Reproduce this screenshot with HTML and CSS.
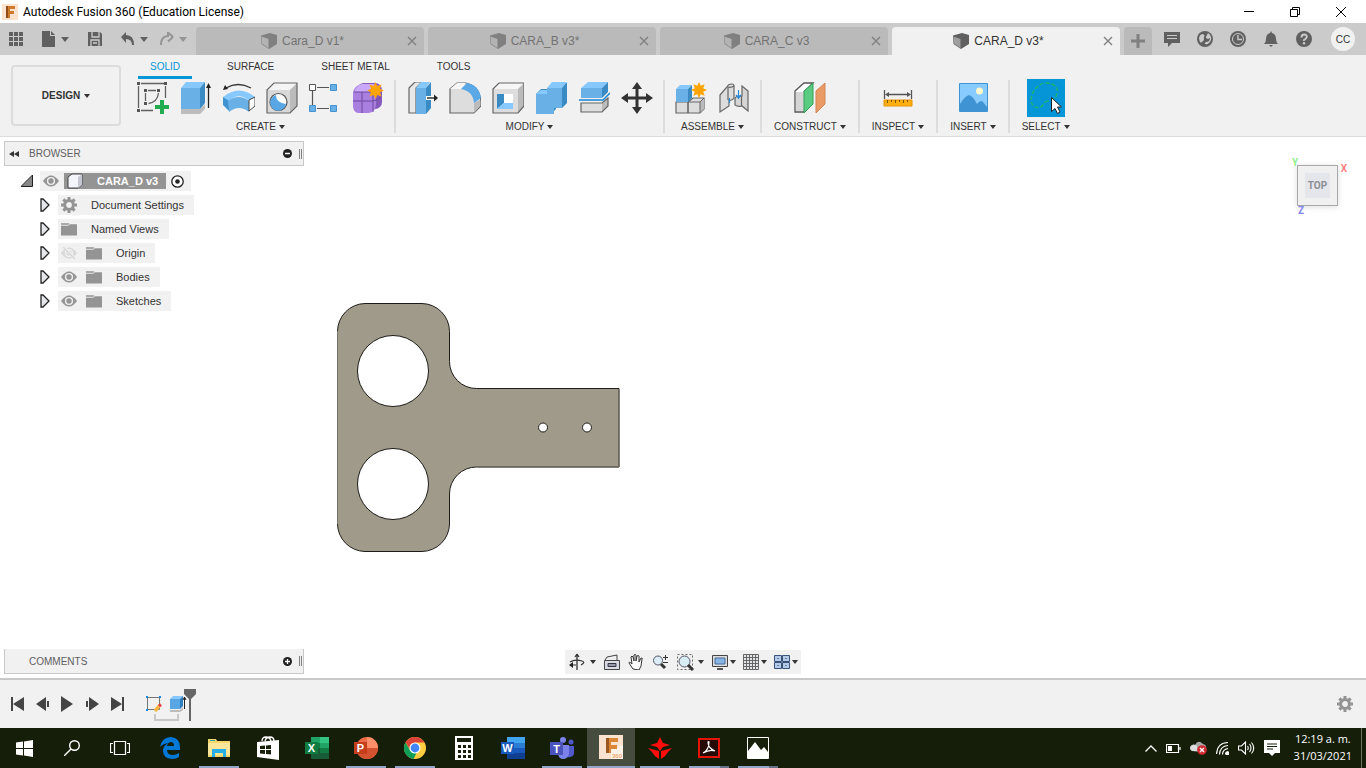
FILE: index.html
```html
<!DOCTYPE html>
<html lang="en">
<head>
<meta charset="utf-8">
<title>Autodesk Fusion 360 (Education License)</title>
<link rel="stylesheet" href="styles.css">
</head>
<body>
<svg class="defs" aria-hidden="true">
  <defs>
    <symbol id="cube" viewBox="0 0 16 16"><path d="M0 2.500L9 0l7 2v9l-8 5-7.500-5z" fill="currentColor"/><path d="M.5 3.500L7.500 6v9l-6.500-4.500z" fill="#fff" opacity=".4"/></symbol>
    <symbol id="close" viewBox="0 0 10 10"><path d="M1 1l8 8M9 1L1 9" stroke="currentColor" stroke-width="1.4"/></symbol>
    <symbol id="eye" viewBox="0 0 16 16"><path d="M0 8q8-11 16 0-8 11-16 0z" fill="currentColor"/><circle cx="8" cy="8" r="3.4" fill="none" stroke="#f1f1f1" stroke-width="1.4"/></symbol>
    <symbol id="folder" viewBox="0 0 17 14"><path d="M0 1h8l2 1h7v12H0z" fill="currentColor"/><path d="M0 3h8l2-2" fill="none" stroke="#f1f1f1"/></symbol>
    <symbol id="expand" viewBox="0 0 10 14"><path d="M1 1h2l6 6-6 6H1z" fill="#e4e6ea" stroke="#222" stroke-width="1.3"/></symbol>
    <symbol id="gear" viewBox="0 0 16 16"><g fill="currentColor"><path d="M6.5 0h3v16h-3zM0 6.5h16v3H0z"/><path d="M6.5 0h3v16h-3zM0 6.5h16v3H0z" transform="rotate(45 8 8)"/></g><circle cx="8" cy="8" r="4.4" fill="#f1f1f1" stroke="currentColor" stroke-width="3"/></symbol>
    <symbol id="star" viewBox="-8 -8 16 16"><path d="M8 0 4.2 1.7 5.7 5.7 1.7 4.2 0 8-1.7 4.2-5.7 5.7-4.2 1.7-8 0-4.2-1.7-5.7-5.7-1.7-4.2 0-8 1.7-4.2 5.7-5.7 4.2-1.7z" fill="#ffa400"/></symbol>
  </defs>
</svg>

<header class="titlebar">
  <svg class="app-logo" width="16" height="16" viewBox="0 0 16 16"><rect width="16" height="16" fill="#fbe3cf"/><path d="M4 2h9v3H8v2h4v3H8v4H4z" fill="#cf7a2c"/><path d="M4 2h2v12H4z" fill="#8e4c18"/></svg>
  <h1 class="app-title">Autodesk Fusion 360 (Education License)</h1>
  <div class="window-buttons">
    <button aria-label="Minimize"><svg width="10" height="10"><path d="M0 4.5h10" stroke="#000"/></svg></button>
    <button aria-label="Restore"><svg width="10" height="10" fill="none" stroke="#000"><path d="M.5 2.500h7v7h-7zM2.500 2.500v-2h7v7h-2"/></svg></button>
    <button aria-label="Close"><svg width="10" height="10"><path d="M0 0l10 10M10 0L0 10" stroke="#000"/></svg></button>
  </div>
</header>

<nav class="tabbar">
  <div class="quick-tools">
    <button aria-label="Data panel"><svg width="14" height="14" fill="#606060"><path d="M0 0h4v4H0zM5 0h4v4H5zM10 0h4v4h-4zM0 5h4v4H0zM5 5h4v4H5zM10 5h4v4h-4zM0 10h4v4H0zM5 10h4v4H5zM10 10h4v4h-4z"/></svg></button>
    <button class="with-caret" aria-label="File"><svg width="14" height="16"><path d="M0 0h8v5h5v11H0z" fill="#606060"/><path d="M9 0l4 4H9z" fill="#606060"/></svg><i class="caret wide"></i></button>
    <button aria-label="Save"><svg width="14" height="14"><path d="M0 0h12l2 2v12H0z" fill="#606060"/><path d="M4 0v5h7V0M3 14V8h8v6M5 11h4" fill="none" stroke="#cbcbcb" stroke-width="1.3"/></svg></button>
    <div class="history">
      <button class="with-caret" aria-label="Undo"><svg width="14" height="14"><path d="M0 5l5-5v3q8 0 8 10h-2q0-6-6-6v4z" fill="#606060"/></svg><i class="caret wide"></i></button>
      <button class="with-caret faded" aria-label="Redo"><svg width="14" height="14"><path d="M13 5L8 .5V4Q1 4 1 13M13 5L8 9.500" fill="none" stroke="#606060" stroke-width="2"/></svg><i class="caret wide"></i></button>
    </div>
  </div>
  <div class="doc-tabs">
    <div class="doc-tab"><button class="doc-name"><svg width="16" height="16"><use href="#cube"/></svg>Cara_D v1*</button><button class="doc-close" aria-label="Close Cara_D v1"><svg width="10" height="10"><use href="#close"/></svg></button></div>
    <div class="doc-tab"><button class="doc-name"><svg width="16" height="16"><use href="#cube"/></svg>CARA_B v3*</button><button class="doc-close" aria-label="Close CARA_B v3"><svg width="10" height="10"><use href="#close"/></svg></button></div>
    <div class="doc-tab"><button class="doc-name"><svg width="16" height="16"><use href="#cube"/></svg>CARA_C v3</button><button class="doc-close" aria-label="Close CARA_C v3"><svg width="10" height="10"><use href="#close"/></svg></button></div>
    <div class="doc-tab active"><button class="doc-name"><svg width="16" height="16"><use href="#cube"/></svg>CARA_D v3*</button><button class="doc-close" aria-label="Close CARA_D v3"><svg width="10" height="10"><use href="#close"/></svg></button></div>
    <button class="new-tab" aria-label="New design"><svg width="14" height="14"><path d="M7 0v14M0 7h14" stroke="#808080" stroke-width="3"/></svg></button>
  </div>
  <div class="account-tools">
    <button aria-label="Feedback"><svg width="16" height="16"><path d="M0 1h16v11H8l-4 4v-4H0z" fill="#606060"/><path d="M3 4.500h10M3 7.500h10" stroke="#cbcbcb"/></svg></button>
    <button aria-label="Extensions"><svg width="16" height="16"><circle cx="8" cy="8" r="8" fill="#606060"/><path d="M2 7q1-4 4-4l3 3 2-4q4 3 3 7-2 5-6 4l-1-3-3 2q-2-2-2-5z" fill="#cbcbcb"/><path d="M3 13l4-4q-1-4 2-5v3l2 1 2-1q0 4-4 4l-4 4z" fill="#606060"/></svg></button>
    <button aria-label="Job status"><svg width="16" height="16"><circle cx="8" cy="8" r="8" fill="#606060"/><circle cx="8" cy="8" r="5.500" fill="none" stroke="#cbcbcb"/><path d="M8 4v4.500h4" fill="none" stroke="#cbcbcb" stroke-width="1.400"/></svg></button>
    <button aria-label="Notifications"><svg width="16" height="16" fill="#606060"><path d="M8 0l1 2q4 1 4 6 0 3 2 5H1q2-2 2-5 0-5 4-6z"/><path d="M6 14h4l-2 2z"/></svg></button>
    <button aria-label="Help"><svg width="16" height="16"><circle cx="8" cy="8" r="8" fill="#606060"/><path d="M5.500 6.500q0-3 2.700-3t2.600 2.500Q10.500 7.500 8 9v1" fill="none" stroke="#cbcbcb" stroke-width="1.900"/><circle cx="8" cy="12.300" r="1.200" fill="#cbcbcb"/></svg></button>
    <button class="avatar" aria-label="Account">CC</button>
  </div>
</nav>

<section class="ribbon">
  <button class="workspace-switch">DESIGN<i class="caret"></i></button>
  <div class="ribbon-main">
    <div class="ribbon-tabs">
      <button class="ribbon-tab active">SOLID</button>
      <button class="ribbon-tab">SURFACE</button>
      <button class="ribbon-tab">SHEET METAL</button>
      <button class="ribbon-tab">TOOLS</button>
    </div>
    <div class="groups">
      <div class="group">
        <div class="group-icons">
          <button aria-label="Create sketch"><svg width="32" height="32" fill="none" stroke="#606060"><path d="M4 1.500h23M1.500 4v22M28.500 4v12M4 28.500h12M11 8.500h8M8.500 11v8M21.500 11q-1 9-10 10.500" stroke-width="1.300"/><path d="M0 0h3v3H0zM27 0h3v3h-3zM0 27h3v3H0zM7 7h3v3H7zM20 7h3v3h-3zM7 20h3v3H7z" fill="#555" stroke="none"/><path d="M25 18v14M18 25h14" stroke="#21ac50" stroke-width="4"/></svg></button>
          <button aria-label="Extrude"><svg width="32" height="32"><path d="M1 27h19l5-5v5l-5 5H1z" fill="#bdbdbd"/><path d="M1 6v21h19V6z" fill="#69b0e6"/><path d="M1 6l5-6h19l-5 6z" fill="#87c9ff"/><path d="M20 6l5-6v21l-5 6z" fill="#3a8ac4"/><path d="M28.500 5v21" stroke="#222" stroke-width="1.300"/><path d="M28.500 1l2.500 5h-5z" fill="#222"/></svg></button>
          <button aria-label="Revolve"><svg width="32" height="32"><path d="M3 6q12-7 25 0" fill="none" stroke="#333" stroke-width="1.300"/><path d="M0 8l2-5 3 4z" fill="#222"/><path d="M0 15Q16 2 32 15l-6 4Q16 9 5 20z" fill="#87c9ff"/><path d="M0 15l6 4v10l-6-6z" fill="#3f93d2"/><path d="M5 19q11-8 21 0v11q-10-8-20 0z" fill="#69b0e6"/><path d="M26 18l6-3v9l-6 5z" fill="#fff" stroke="#444"/></svg></button>
          <button aria-label="Hole"><svg width="32" height="32"><path d="M1 8h23v23H1z" fill="#d8d8d8"/><path d="M1 8l7-7h23l-7 7z" fill="#f4f4f4"/><path d="M24 8l7-7v23l-7 7z" fill="#bbb"/><path d="M1 8l7-7h23v23l-7 7H1z" fill="none" stroke="#666" stroke-width="1.200"/><circle cx="12.500" cy="20" r="8.500" fill="#fff" stroke="#555" stroke-width="1.200"/><path d="M10 13q0 8 10 9a8 8 0 1 1-10-9z" fill="#58a7e4"/></svg></button>
          <button aria-label="Rectangular pattern"><svg width="32" height="32"><path d="M8 5.500h12M3.500 9v14M8 26.500h12" stroke="#555" stroke-width="1.200"/><path d="M.5 2.500h6v6h-6z" fill="#fff" stroke="#555"/><path d="M21.500 2.500h6v6h-6zM.5 23.500h6v6h-6zM21.500 23.500h6v6h-6z" fill="#69b0e6" stroke="#4492d0"/></svg></button>
          <button aria-label="Create form"><svg width="32" height="32"><rect x="5" y="1" width="25" height="26" rx="7" fill="#8558bc"/><path d="M1 10Q3 3 10 2h12q4 1 2 8v13q-1 8-8 8H7q-5 0-6-6z" fill="#a97fe0"/><path d="M2 10Q5 3 10 2h12q2 4-3 8z" fill="#cba9fa"/><path d="M1 19h20q6-1 8-4M10 10v21M21 10v20M2 10h18q6-2 8-7" fill="none" stroke="#6f4a9f"/><use href="#star" x="15" y="0" width="17" height="17"/></svg></button>
        </div>
        <button class="group-label">CREATE<i class="caret"></i></button>
      </div>
      <div class="group">
        <div class="group-icons">
          <button aria-label="Press pull"><svg width="32" height="32"><path d="M3 6l6-6h7l-6 6v25H3z" fill="#e8e8e8" stroke="#666" stroke-width="1.200"/><path d="M10 6h10v26H10z" fill="#69b0e6"/><path d="M10 6l5-6h9l-4 6z" fill="#87c9ff"/><path d="M20 6l5-6v26l-5 6z" fill="#3a8ac4"/><path d="M20 16h8" stroke="#fff" stroke-width="4"/><path d="M21 16h8" stroke="#222" stroke-width="1.400"/><path d="M28 12.500l4 3.500-4 3.500z" fill="#222"/></svg></button>
          <button aria-label="Fillet"><svg width="32" height="32"><path d="M1 7l7-6h9q14 3 15 19v4l-7 7H1z" fill="#ddd" stroke="#666" stroke-width="1.200"/><path d="M1 7l7-6h9l-5 6z" fill="#f6f6f6"/><path d="M25 21l6-3v6l-6 7z" fill="#bbb"/><path d="M12 7l6-6q12 2 14 15l-7 5Q24 9 12 7z" fill="#5aa9e6"/></svg></button>
          <button aria-label="Shell"><svg width="32" height="32"><path d="M1 7h25v24H1z" fill="#ddd"/><path d="M1 7l6-6h25l-6 6z" fill="#f6f6f6"/><path d="M26 7l6-6v23l-6 7z" fill="#bbb"/><path d="M1 7l6-6h25v23l-6 7H1z" fill="none" stroke="#666" stroke-width="1.200"/><path d="M5 12h16v15H5z" fill="#fff"/><path d="M5 12l7 0v9l-7 6z" fill="#3a8ac4"/><path d="M12 21h9v6H5z" fill="#87c9ff"/></svg></button>
          <button aria-label="Combine"><svg width="32" height="32"><path d="M1 12l5-5h6l5-6h15v20l-5 5h-6v1l-5 5H1z" fill="#3a8ac4"/><path d="M1 12h11V6h15v20h-8v6H1z" fill="#69b0e6"/><path d="M1 12l5-4h6v4zM12 6l5-6h15l-5 6z" fill="#87c9ff"/></svg></button>
          <button aria-label="Split body"><svg width="32" height="32"><path d="M3 6h21v10H3z" fill="#69b0e6"/><path d="M3 6l7-6h20l-6 6z" fill="#87c9ff"/><path d="M24 6l6-6v10l-6 6z" fill="#3a8ac4"/><path d="M1 18h24l7-7" fill="none" stroke="#1385d8" stroke-width="1.500"/><path d="M3 21h21v9H3z" fill="#ddd"/><path d="M24 21l6-5v8l-6 6z" fill="#bbb"/><path d="M3 21h21l6-5v8l-6 6H3z" fill="none" stroke="#666" stroke-width="1.200"/></svg></button>
          <button aria-label="Move"><svg width="32" height="32" fill="#333"><path d="M14.500 6h3v20h-3zM6 14.500h20v3H6z"/><path d="M16 0l5 7H11zM16 32l5-7H11zM0 16l7-5v10zM32 16l-7-5v10z"/></svg></button>
        </div>
        <button class="group-label">MODIFY<i class="caret"></i></button>
      </div>
      <div class="group">
        <div class="group-icons">
          <button aria-label="New component"><svg width="32" height="32"><path d="M1 20h12v11H1zM13 20l5-4h11v11l-4 4H13z" fill="#ddd" stroke="#666" stroke-width="1.200"/><path d="M25 20l4-4v11l-4 4z" fill="#bbb"/><path d="M13 20h12v11M13 20v11M25 20l4-4" fill="none" stroke="#666"/><path d="M1 7h12v13H1z" fill="#69b0e6"/><path d="M1 7l4-4h12l-4 4z" fill="#87c9ff"/><path d="M13 7l4-4v13l-4 4z" fill="#3a8ac4"/><use href="#star" x="16" y="0" width="16" height="16"/></svg></button>
          <button aria-label="Joint"><svg width="32" height="32" stroke="#666" stroke-width="1.200"><path d="M2 13l7-8q1-3 5-3 2 0 2 2v12q-2 3-5 2v6l-9 6z" fill="#ddd"/><path d="M10 5v13M10 5q3 1 6-1" fill="none"/><path d="M30 9l-6-5v10h-4q-3 1-3 3v6q3 2 7 1l6 5z" fill="#d5d5d5"/><path d="M23.500 14v10" fill="none"/><path d="M11.500 16v5M20.500 8v9M18 13l2.500 3 2.500-3" fill="none" stroke="#2487d8"/></svg></button>
        </div>
        <button class="group-label">ASSEMBLE<i class="caret"></i></button>
      </div>
      <div class="group">
        <div class="group-icons"><button aria-label="Offset plane"><svg width="32" height="32"><path d="M1 9l9-8h9l-9 9v20H1z" fill="#fff" stroke="#555" stroke-width="1.300"/><path d="M2 10h8v19H2z" fill="#d5d5d5"/><path d="M10 9l9-8v21l-9 9z" fill="#5acb80" stroke="#35a05b"/><path d="M22 9l9-8v21l-9 9z" fill="#ea9b65" stroke="#d08455"/></svg></button></div>
        <button class="group-label">CONSTRUCT<i class="caret"></i></button>
      </div>
      <div class="group">
        <div class="group-icons"><button aria-label="Measure"><svg width="32" height="32"><path d="M2.500 8v9M29.500 8v9M5 12.500h22" stroke="#555" stroke-width="1.300"/><path d="M3 12.500l4-2.500v5zM29 12.500L25 10v5z" fill="#555"/><path d="M2 18h28v6H2z" fill="#ffaf10" stroke="#e79200"/><path d="M5.500 18v3M9.500 18v2M13.500 18v3M17.500 18v2M21.500 18v3M25.500 18v2" stroke="#7a5200"/></svg></button></div>
        <button class="group-label">INSPECT<i class="caret"></i></button>
      </div>
      <div class="group">
        <div class="group-icons"><button aria-label="Insert image"><svg width="32" height="32"><path d="M2.500 1.500h28v28h-28z" fill="#87cbff" stroke="#3f93d2"/><path d="M3 22q5-8 9-9 4 1 8 9 4-5 6-2l4 5v4H3z" fill="#3f93d2"/><circle cx="22.500" cy="9" r="3.500" fill="#fff8cc"/></svg></button></div>
        <button class="group-label">INSERT<i class="caret"></i></button>
      </div>
      <div class="group">
        <div class="group-icons"><button class="selected" aria-label="Select"><svg width="38" height="38"><path d="M21 22q-3 0-5 4-3 4-8 2-6-4-3-12 4-11 14-12 13 1 11 10-1 7-9 8z" fill="none" stroke="#20b36b" stroke-width="1.400" stroke-dasharray="4 2"/><path d="M24.500 18.500v14l3.500-3 2.500 5 2.500-1.500-2.500-5h4z" fill="#fff" stroke="#222"/></svg></button></div>
        <button class="group-label">SELECT<i class="caret"></i></button>
      </div>
    </div>
  </div>
</section>

<main class="workspace">
  <aside class="sidebar">
    <section>
      <div class="panel">
        <button class="collapse" aria-label="Collapse browser"><svg width="10" height="6"><path d="M5 0v6L0 3zM10 0v6L5 3z" fill="#333"/></svg></button>
        <h2>BROWSER</h2>
        <button aria-label="Hide all"><svg width="9" height="9"><circle cx="4.500" cy="4.500" r="4.500" fill="#222"/><path d="M2 4.500h5" stroke="#fff" stroke-width="1.500"/></svg></button>
        <span class="grip"></span>
      </div>
      <ul class="tree">
        <li class="root"><button aria-label="Collapse CARA_D"><svg width="12" height="12"><path d="M11.500 0v11.500H0z" fill="#888" stroke="#222"/></svg></button>
          <div class="chip"><svg width="16" height="16"><use href="#eye"/></svg><span class="current"><svg width="16" height="16"><path d="M1 4l4-3h10v11l-4 3H1z" fill="#f4f5fa" stroke="#444"/><path d="M11 4l4-3v11l-4 3z" fill="#c5c8d2"/></svg>CARA_D v3</span><svg width="13" height="13"><circle cx="6.500" cy="6.500" r="5.700" fill="#fff" stroke="#222" stroke-width="1.300"/><circle cx="6.500" cy="6.500" r="2.300" fill="#222"/></svg></div></li>
        <li><button aria-label="Expand Document Settings"><svg width="10" height="14"><use href="#expand"/></svg></button><div class="chip"><svg width="16" height="16"><use href="#gear"/></svg><span>Document Settings</span></div></li>
        <li><button aria-label="Expand Named Views"><svg width="10" height="14"><use href="#expand"/></svg></button><div class="chip"><svg width="16" height="14"><use href="#folder"/></svg><span>Named Views</span></div></li>
        <li><button aria-label="Expand Origin"><svg width="10" height="14"><use href="#expand"/></svg></button><div class="chip"><svg class="hidden-eye" width="16" height="16"><use href="#eye"/><path d="M2 1l13 14" stroke="#f1f1f1" stroke-width="3"/><path d="M2 2l12 12" stroke="currentColor" stroke-width="1.500"/></svg><svg width="16" height="14"><use href="#folder"/></svg><span>Origin</span></div></li>
        <li><button aria-label="Expand Bodies"><svg width="10" height="14"><use href="#expand"/></svg></button><div class="chip"><svg width="16" height="16"><use href="#eye"/></svg><svg width="16" height="14"><use href="#folder"/></svg><span>Bodies</span></div></li>
        <li><button aria-label="Expand Sketches"><svg width="10" height="14"><use href="#expand"/></svg></button><div class="chip"><svg width="16" height="16"><use href="#eye"/></svg><svg width="16" height="14"><use href="#folder"/></svg><span>Sketches</span></div></li>
      </ul>
    </section>
    <div class="panel comments">
      <h2>COMMENTS</h2>
      <button aria-label="Add comment"><svg width="9" height="9"><circle cx="4.500" cy="4.500" r="4.500" fill="#222"/><path d="M2 4.500h5M4.500 2v5" stroke="#fff" stroke-width="1.300"/></svg></button>
      <span class="grip"></span>
    </div>
  </aside>

  <svg class="model" width="284" height="250" viewBox="0 0 284 250" role="img" aria-label="Flat part, top view">
    <path d="M28 .5h57a28 28 0 0 1 27.500 28v30a27 27 0 0 0 27 27H282v78.500H139.500a27 27 0 0 0-27 27v30a28 28 0 0 1-27.500 27.500H28A28 28 0 0 1 .5 221V28.500A28 28 0 0 1 28 .5z" fill="#a09a8a" stroke="#1d1c19"/>
    <g fill="#fff" stroke="#1d1c19"><circle cx="56" cy="68" r="35.500"/><circle cx="56" cy="181" r="35.500"/><circle cx="206" cy="124.500" r="4.500"/><circle cx="250" cy="124.500" r="4.500"/></g>
    <path d="M.5 28v193M282 86v78H140" fill="none" stroke="#77736a"/>
  </svg>

  <div class="view-tools">
    <button aria-label="Orbit"><svg width="18" height="18" fill="none" stroke="#333"><path d="M9 1v16M9 1L7 4M9 1l2 3" stroke-width="1.300"/><path d="M8 12H3M13 12q5-3 1-4-7-2-12 1" stroke-width="1.200"/><path d="M1 12l4-3v6z" fill="#222" stroke="none"/></svg><i class="caret"></i></button>
    <button aria-label="Look at"><svg width="16" height="16" fill="none" stroke="#444"><path d="M.5 6.500h15v9H.5z" fill="#d9dde3"/><path d="M1 6l2-3 10-2v5" fill="#eee"/><path d="M4 9.500h8v3H4z" fill="#99a" stroke="#334"/></svg></button>
    <button aria-label="Pan"><svg width="16" height="16"><path d="M5 15L1 9q0-2 3 1L3 3q1-2 2 0l1 4V1q2-1 2 0v6l1-5q2-1 2 0v6l2-4q2 0 1 1l-1 7-2 4z" fill="#fff" stroke="#333"/></svg></button>
    <button aria-label="Zoom"><svg width="17" height="16"><circle cx="6" cy="6.500" r="4.500" fill="#dceef5" stroke="#556"/><path d="M9 10l4 4" stroke="#333" stroke-width="3"/><path d="M11 3.500h5M13.500 1v5M11 8.500h5" stroke="#333"/></svg></button>
    <button aria-label="Zoom window"><svg width="17" height="17"><path d="M.5.5h15v15H.5z" fill="none" stroke="#666" stroke-dasharray="2 2"/><circle cx="7.500" cy="7.500" r="5.500" fill="#d9eef4" stroke="#556"/><path d="M11 11l5 5" stroke="#333" stroke-width="3"/></svg><i class="caret"></i></button>
    <button class="tight" aria-label="Display settings"><svg width="16" height="16"><path d="M.5 1.500h15v11H.5z" fill="#ddd" stroke="#444"/><path d="M3 4h10v6H3z" fill="#88b5e5" stroke="#466b9c"/><path d="M5 14h6v2H5z" fill="#555"/></svg><i class="caret"></i></button>
    <button class="tight" aria-label="Grid settings"><svg width="16" height="16" fill="#e4e6ea" stroke="#666"><path d="M.5.5h15v15H.5z"/><path d="M3.500 0v16M6.500 0v16M9.500 0v16M12.500 0v16M0 3.500h16M0 6.500h16M0 9.500h16M0 12.500h16"/></svg><i class="caret"></i></button>
    <button class="tight" aria-label="Viewports"><svg width="16" height="14" fill="#b4cbe8" stroke="#3b5278"><path d="M.5.500h7v6h-7zM8.500.500h7v6h-7zM.5 7.500h7v6h-7zM8.500 7.500h7v6h-7z"/><path d="M3 3.500h2M11 3.500h2M3 10.500h2M11 10.500h2" stroke="#6080ad"/></svg><i class="caret"></i></button>
  </div>

  <div class="view-cube">
    <button class="cube-face"><span>TOP</span></button>
    <b class="axis axis-x">X</b><b class="axis axis-y">Y</b><b class="axis axis-z">Z</b>
  </div>
</main>

<section class="timeline">
  <div class="playback">
    <button aria-label="Go to start"><svg width="13" height="14"><path d="M0 0h2v14H0zM13 0v14L2 7z" fill="#444"/></svg></button>
    <button aria-label="Step back"><svg width="13" height="14"><path d="M10 0v14L0 7zM11 4h2v6h-2z" fill="#444"/></svg></button>
    <button aria-label="Play"><svg width="13" height="16"><path d="M0 0l12 8-12 8z" fill="#444"/></svg></button>
    <button aria-label="Step forward"><svg width="13" height="14"><path d="M3 0v14l10-7zM0 4h2v6H0z" fill="#444"/></svg></button>
    <button aria-label="Go to end"><svg width="13" height="14"><path d="M11 0h2v14h-2zM0 0v14l11-7z" fill="#444"/></svg></button>
  </div>
  <div class="track">
    <button aria-label="Sketch1"><svg width="16" height="16"><path d="M1.500 1.500h12v12h-12z" fill="none" stroke="#777"/><path d="M0 0h2v2H0zM13 0h2v2h-2zM0 13h2v2H0z" fill="#1389e0"/><path d="M9 15l5-6" stroke="#f7b63e" stroke-width="3.500"/><path d="M13 10l2-1.500" stroke="#e33c4c" stroke-width="3"/></svg></button>
    <button aria-label="Extrude1"><svg width="17" height="17"><path d="M0 14h10l3-3v3l-3 2H0z" fill="#bbb"/><path d="M0 3h10v10H0z" fill="#58a7e4"/><path d="M0 3l3-3h10l-3 3z" fill="#87c9ff"/><path d="M10 3l3-3v10l-3 3z" fill="#2e7fbe"/><path d="M14.500 1v12M13 4l1.500-3L16 4" stroke="#222" fill="none"/></svg></button>
    <span class="bracket"></span>
    <svg class="marker" width="12" height="32"><path d="M0 0h12v5L7 10v22H5V10L0 5z" fill="#666"/></svg>
  </div>
  <button class="timeline-settings" aria-label="Timeline settings"><svg width="16" height="16"><use href="#gear"/></svg></button>
</section>

<footer class="taskbar">
  <div class="start-area">
    <button aria-label="Start"><svg width="17" height="17" fill="#fff"><path d="M0 2.500l7-1V8H0zM8 1.400L17 0v8H8zM0 9h7v6.500l-7-1zM8 9h9v8l-9-1.400z"/></svg></button>
    <button aria-label="Search"><svg width="16" height="16" fill="none" stroke="#fff" stroke-width="1.400"><circle cx="10.500" cy="5.500" r="4.800"/><path d="M7 9l-7 7"/></svg></button>
    <button aria-label="Task view"><svg width="20" height="14" fill="none" stroke="#fff" stroke-width="1.200"><path d="M4.500.5h11v13h-11zM3 2.500H.5v9H3M17 2.500h2.500v9H17"/></svg></button>
  </div>
  <div class="apps">
    <button aria-label="Edge"><svg width="20" height="22"><path d="M0 10Q2 0 11 0q9 1 9 10v3H7q0 5 6 5 3 0 6-2v4q-3 2-7 2Q3 21 3 14q0-5 5-8-6 1-8 4zM7 9h7q0-4-3-4T7 9z" fill="#0078d7" fill-rule="evenodd"/></svg></button>
    <button class="open" aria-label="File Explorer"><svg width="22" height="20"><path d="M0 1h8l1 2h13v16H0z" fill="#f9d66c"/><path d="M0 5h22v12H0z" fill="#fce69a"/><path d="M4 19v-8h14v8h-3v-4H7v4z" fill="#27aee5"/><path d="M2 2h5v1H2z" fill="#2aa"/></svg></button>
    <button aria-label="Store"><svg width="22" height="24"><path d="M0 6l22-2v20L0 21z" fill="#fff"/><path d="M5 5q0-4 4-4t5 4M8 5q1-4 5-4t4 4" fill="none" stroke="#fff" stroke-width="1.300"/><path d="M3 10l5-.5V13H3zM9 9.400l5-.5V13H9zM3 14h5v4l-5-.5zM9 14h5v4.600L9 18z" fill="#17200b"/></svg></button>
    <button aria-label="Excel"><svg width="24" height="22"><path d="M6 0h18v22H6z" fill="#185c37"/><path d="M6 0h9v6H6z" fill="#21a366"/><path d="M15 0h9v6h-9z" fill="#33c481"/><path d="M6 6h9v5H6z" fill="#107c41"/><path d="M15 6h9v5h-9z" fill="#21a366"/><path d="M15 11h9v5h-9z" fill="#107c41"/><rect y="5" width="13" height="12" fill="#107c41"/><text class="logo-text" x="6.500" y="15" font-size="11">X</text></svg></button>
    <button class="open" aria-label="PowerPoint"><svg width="24" height="22"><circle cx="13" cy="11" r="11" fill="#ed6c47"/><path d="M13 0a11 11 0 0 1 11 11H13z" fill="#ff8f6b"/><path d="M2 11h22a11 11 0 0 1-22 0z" fill="#d35230"/><rect y="5" width="13" height="12" fill="#c43e1c"/><text class="logo-text" x="6.500" y="15" font-size="11">P</text></svg></button>
    <button class="open" aria-label="Chrome"><svg width="22" height="22"><circle cx="11" cy="11" r="11" fill="#ffcd40"/><path d="M1.500 5.500A11 11 0 0 1 20.500 5.500H11L6.500 13z" fill="#db4437"/><path d="M1.500 5.500l5 8.500 6 2-3 6A11 11 0 0 1 1.500 5.500z" fill="#0f9d58"/><circle cx="11" cy="11" r="5" fill="#4285f4" stroke="#fff" stroke-width="1.200"/></svg></button>
    <button aria-label="Calculator"><svg width="18" height="24"><path d="M0 0h18v24H0z" fill="#fff"/><path d="M2 2h14v4H2zM3 9h3v3H3zM8 9h3v3H8zM13 9h3v3h-3zM3 14h3v3H3zM8 14h3v3H8zM13 14h3v3h-3zM3 19h3v3H3zM8 19h3v3H8zM13 19h3v3h-3z" fill="#17200b"/></svg></button>
    <button aria-label="Word"><svg width="24" height="22"><path d="M6 0h18v6H6z" fill="#41a5ee"/><path d="M6 6h18v5H6z" fill="#2b7cd3"/><path d="M6 11h18v5H6z" fill="#185abd"/><path d="M6 16h18v6H6z" fill="#103f91"/><rect y="5" width="13" height="12" fill="#185abd"/><text class="logo-text" x="6.500" y="15" font-size="11">W</text></svg></button>
    <button class="open" aria-label="Teams"><svg width="24" height="22"><circle cx="13" cy="3" r="3" fill="#7b83eb"/><circle cx="21" cy="5" r="2.500" fill="#5059c9"/><path d="M16 9h8v8q-2 4-7 3z" fill="#5059c9"/><path d="M8 8h11v9q-1 5-6 5-4 0-5-5z" fill="#7b83eb"/><rect y="5" width="13" height="13" fill="#4b53bc"/><text class="logo-text" x="6.500" y="15.500" font-size="11">T</text></svg></button>
    <button class="focused" aria-label="Fusion 360"><svg width="24" height="24"><path d="M0 0h24v24H0z" fill="#fbe3cf"/><path d="M12 14l12-4v14H12z" fill="#fff3e8"/><path d="M7 3h12v4h-7v3h6v4h-6v4H7z" fill="#dc8736"/><path d="M7 3h3v15H7z" fill="#9b5821"/><text x="13" y="23" font-size="6" fill="#e58d3d" font-family="Liberation Sans">360</text></svg></button>
    <button class="open" aria-label="Mitsubishi tool"><svg width="24" height="22" fill="#ff0d0d"><path d="M12 0l3 6 7 2-7 2-3 4-3-4-7-2 7-2zM0 11l11 3v8q-5-3-7-7zM24 11l-11 3v8q5-3 7-7z"/></svg></button>
    <button class="open multi" aria-label="Acrobat"><svg width="22" height="20"><path d="M1 1h20v18H1z" fill="#260a08" stroke="#e51408" stroke-width="2"/><path d="M5 15q6-3 6-11 0-1-1 0 0 6 7 9-5-2-12 2z" fill="none" stroke="#fff" stroke-width="1.200"/></svg></button>
    <button class="open multi" aria-label="Photos"><svg width="22" height="22"><path d="M.5.500h21v21H.5z" fill="#17200b" stroke="#fff"/><path d="M1 14l7-9 6 8 3-3 4 5v7H1z" fill="#fff"/></svg></button>
  </div>
  <div class="tray">
    <button aria-label="Show hidden icons"><svg width="12" height="7"><path d="M.5 6.500L6 1l5.500 5.500" fill="none" stroke="#fff" stroke-width="1.300"/></svg></button>
    <button aria-label="Battery"><svg width="15" height="10"><path d="M.5 1.500h12v8H.5zM14 4v3" fill="none" stroke="#fff" stroke-width="1.200"/><path d="M2 3h4v5H2z" fill="#fff"/></svg></button>
    <button aria-label="OneDrive"><svg width="17" height="14"><path d="M2 10q-4-3 0-6 2-1 3 0 3-6 8-1 4 1 3 5l-6 3z" fill="#aaa"/><path d="M2 10q-4-3 0-6 3-1 5 1v5z" fill="#ddd"/><circle cx="12" cy="9" r="4.800" fill="#d22a30"/><path d="M10 7l4 4M14 7l-4 4" stroke="#fff" stroke-width="1.300"/></svg></button>
    <button aria-label="Network"><svg width="13" height="13" fill="none" stroke="#fff" stroke-width="1.200"><path d="M.5 12Q1 1 12 .5M3.500 12.500Q4 4 12 3.500M6.500 12.500q0-5 5.500-6M9.500 12.500q0-3 3-3"/><path d="M10 10h3v3h-3z" fill="#fff" stroke="none"/></svg></button>
    <button aria-label="Volume"><svg width="17" height="14" fill="none" stroke="#fff" stroke-width="1.100"><path d="M.5 5h3l4-4v12l-4-4h-3zM9.500 5q1.500 2 0 4M11.500 3q3 4 0 8M13.500 1.500q4.500 5.500 0 11"/></svg></button>
    <button aria-label="Notifications"><svg width="16" height="16"><path d="M0 0h16v13h-5l-3 3-3-3H0z" fill="#fff"/><path d="M3 4h10M3 6.500h10M3 9h6" stroke="#17200b"/></svg></button>
    <button class="clock"><time>12:19 a. m.</time><span>31/03/2021</span></button>
    <span class="show-desktop"></span>
  </div>
</footer>
</body>
</html>
```
FILE: styles.css
```css
* { box-sizing: border-box; }

body {
  margin: 0;
  height: 100vh;
  display: flex;
  flex-direction: column;
  overflow: hidden;
  background: #fff;
  color: #333;
  font: 11px "Liberation Sans", Arial, sans-serif;
}

button {
  display: flex;
  align-items: center;
  justify-content: center;
  padding: 0;
  border: 0;
  background: none;
  color: inherit;
  font: inherit;
}

svg { display: block; flex: none; }
h1, h2, ul { margin: 0; padding: 0; }
.defs { position: absolute; width: 0; height: 0; }

.caret {
  margin-left: 4px;
  border: 3px solid transparent;
  border-top: 4px solid currentColor;
  border-bottom: 0;
}
.caret.wide { margin-left: 5px; border-width: 5px 4px 0; color: #606060; }

/* Title bar */
.titlebar {
  display: flex;
  align-items: center;
  height: 23px;
  padding: 0 2px;
}
.app-title {
  flex: 1;
  margin-left: 5px;
  color: #000;
  font: 12px/22px Roboto, sans-serif;
}
.window-buttons { display: flex; height: 20px; }
.window-buttons button { width: 46px; }

/* Document tabs */
.tabbar {
  display: flex;
  height: 32px;
  background: #cbcbcb;
}
.quick-tools {
  display: flex;
  align-items: center;
  gap: 19px;
  padding: 0 9px;
}
.history { display: flex; gap: 12px; }
.faded { opacity: .5; }
.doc-tabs {
  flex: 1;
  display: flex;
  gap: 4px;
  padding-top: 4px;
}
.doc-tab {
  flex: 1;
  display: flex;
  padding-left: 9px;
  border-radius: 4px 4px 0 0;
  background: #bababa;
  color: #737373;
}
.doc-tab svg { color: #808080; }
.doc-tab.active { background: #f1f1f1; color: #333; }
.doc-tab.active .doc-name svg { color: #606060; }
.doc-name { flex: 1; gap: 5px; font-size: 12px; }
.doc-close { width: 24px; }
.new-tab {
  width: 28px;
  border-radius: 4px 4px 0 0;
  background: #bababa;
}
.account-tools {
  display: flex;
  align-items: center;
  gap: 17px;
  padding: 0 11px 0 12px;
}
.avatar {
  width: 24px;
  height: 24px;
  margin-left: 2px;
  border-radius: 50%;
  background: #f1f1f1;
  font-size: 10px;
}

/* Ribbon */
.ribbon {
  display: flex;
  border-bottom: 1px solid #dcdcdc;
  background: #f1f1f1;
  font-size: 10px;
}
.workspace-switch {
  width: 110px;
  margin: 10px 6px 10px 11px;
  border: 2px solid #dcdcdc;
  border-radius: 4px;
  font-weight: bold;
}
.ribbon-main { flex: 1; }
.ribbon-tabs {
  display: flex;
  gap: 23px;
  height: 24px;
  padding-left: 11px;
}
.ribbon-tab {
  padding: 0 12px;
  border-top: 1px solid transparent;
  border-bottom: 3px solid transparent;
}
.ribbon-tab.active { border-bottom-color: #0696d7; color: #0696d7; }
.groups { display: flex; }
.group {
  display: flex;
  flex-direction: column;
  align-items: center;
  padding: 0 10px;
  border-right: 2px solid;
  border-image: linear-gradient(transparent 3%, #dcdcdc 3% 93%, transparent 93%) 1;
}
.group:last-child { border: 0; }
.group-icons {
  display: flex;
  align-items: center;
  gap: 11px;
  height: 38px;
}
.group-label { height: 19px; padding: 0 2px; }
.group-label .caret { margin-left: 3px; }
.selected { background: #0696d7; }

/* Workspace */
.workspace {
  position: relative;
  flex: 1;
  display: grid;
  grid-template-columns: 300px 1fr 300px;
  padding: 4px;
}
.sidebar {
  display: flex;
  flex-direction: column;
  justify-content: space-between;
}
.panel {
  display: flex;
  align-items: center;
  height: 25px;
  padding: 0 1px 0 4px;
  border: 1px solid #c8c8c8;
  background: #f1f1f1;
}
.panel h2 {
  flex: 1;
  color: #606060;
  font-size: 10px;
  font-weight: normal;
}
.collapse { margin-right: 10px; }
.comments { padding-left: 24px; border-top: 0; }
.grip {
  width: 3px;
  height: 10px;
  margin-left: 7px;
  border: solid #808080;
  border-width: 0 1px;
}
.tree {
  display: flex;
  flex-direction: column;
  gap: 4px;
  padding: 5px 0 0 36px;
  list-style: none;
}
.tree li { display: flex; align-items: center; gap: 8px; }
.tree .root { margin-left: -19px; gap: 7px; }
.chip {
  display: flex;
  align-items: center;
  gap: 9px;
  height: 20px;
  padding: 0 10px 0 3px;
  background: #f1f1f1;
}
.chip svg { color: #949494; }
.chip > span { margin-left: 5px; }
.chip .hidden-eye { color: #d8d8d8; }
.root .chip { gap: 5px; padding-right: 7px; }
.chip .current {
  display: flex;
  align-items: center;
  gap: 14px;
  height: 16px;
  margin-left: 0;
  padding: 0 8px 0 3px;
  background: #949494;
  color: #fff;
  font-weight: bold;
}
.model { position: absolute; left: 337px; top: 166px; }

.view-tools {
  place-self: end center;
  display: flex;
  align-items: center;
  gap: 8px;
  height: 24px;
  padding: 0 3px;
  background: #f1f1f1;
}
.tight .caret { margin-left: 2px; }
.tight + .tight { margin-left: -1px; }
.view-cube {
  position: relative;
  justify-self: end;
  align-self: start;
  margin: 24px 24px 0 0;
}
.cube-face {
  width: 41px;
  height: 41px;
  border: 1px solid #a8a8a8;
  background: #f0f0f0;
  box-shadow: 0 1px 6px #ddd;
}
.cube-face span {
  width: 25px;
  background: #e5e6eb;
  color: #8b8e94;
  font: bold 10px/25px Roboto, sans-serif;
}
.axis { position: absolute; font: bold 10px/10px Roboto, sans-serif; }
.axis-x { right: -9px; top: -1px; color: #ff8585; }
.axis-y { left: -5px; top: -7px; color: #8df08d; }
.axis-z { left: 1px; bottom: -10px; color: #8686f0; }

/* Timeline */
.timeline {
  display: flex;
  align-items: center;
  height: 50px;
  padding: 0 13px 0 11px;
  border-top: 2px solid #c8c8c8;
  background: #f1f1f1;
}
.playback { display: flex; gap: 12px; }
.track { position: relative; display: flex; gap: 8px; margin-left: 22px; }
.bracket {
  position: absolute;
  left: 8px;
  top: 18px;
  width: 25px;
  height: 7px;
  border: 2px solid #c8c8c8;
  border-top: 0;
}
.marker { position: absolute; left: 38px; top: -7px; }
.timeline-settings { margin-left: auto; color: #949494; }

/* Windows taskbar */
.taskbar {
  display: flex;
  height: 40px;
  background: #151e09;
  color: #fff;
}
.start-area, .apps { display: flex; }
.start-area button, .apps button { width: 48px; }
.apps { gap: 1px; margin-left: 2px; }
.open {
  background: linear-gradient(#92a4c8, #92a4c8) center bottom / 40px 2px no-repeat;
}
.multi {
  background-image: linear-gradient(90deg, #92a4c8 31px, #66728a 31px);
}
.focused {
  border-bottom: 2px solid #92a4c8;
  background: #474d3e;
}
.logo-text {
  fill: #fff;
  font-family: "Liberation Sans", sans-serif;
  font-weight: bold;
  text-anchor: middle;
}
.tray {
  display: flex;
  align-items: center;
  gap: 9px;
  margin-left: auto;
  padding-right: 4px;
}
.clock {
  flex-direction: column;
  margin-left: 5px;
  padding-bottom: 3px;
  font: 11px/17px "Open Sans", sans-serif;
}
.show-desktop { width: 1px; height: 40px; background: #70766a; }
```
